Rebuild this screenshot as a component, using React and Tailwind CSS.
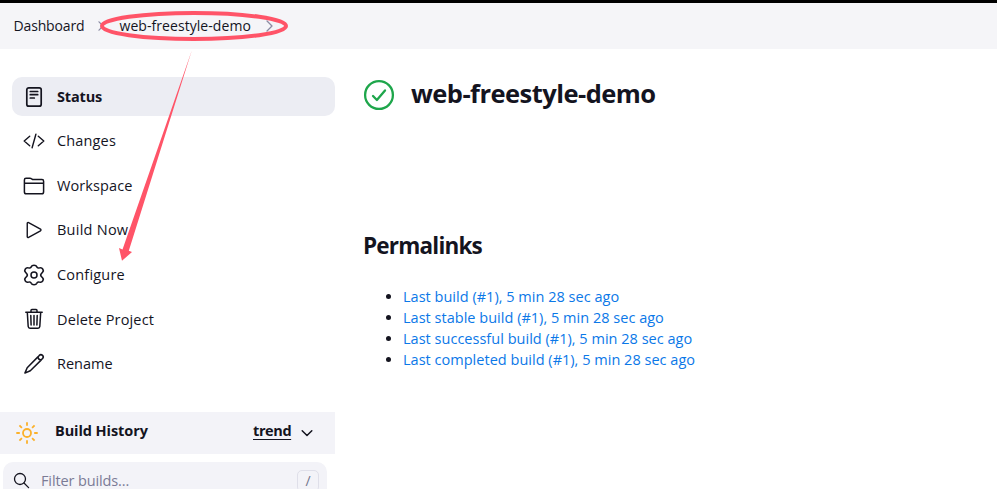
const ink = { fill: 'none', stroke: 'currentColor', strokeLinecap: 'round', strokeLinejoin: 'round' };

function Icon({ children, size = 24, box = 24, width = 1.5, className = '' }) {
  return (
    <svg width={size} height={size} viewBox={`0 0 ${box} ${box}`} {...ink} strokeWidth={width} className={`shrink-0 ${className}`}>
      {children}
    </svg>
  );
}

const StatusIcon = () => (
  <Icon width={1.7}>
    <rect x="4.8" y="2.8" width="14.4" height="18.4" rx="2" />
    <path d="M8.3 6.5h7.4M8.3 9.7h7.4M8.3 13h4" />
  </Icon>
);
const CodeIcon = () => (
  <Icon width={1.4}>
    <path d="M7.7 7.2 2.2 12l5.5 4.8M16.3 7.2l5.5 4.8-5.5 4.8M13.9 5.2l-3.8 13.6" />
  </Icon>
);
const FolderIcon = () => (
  <Icon>
    <path d="M2.4 9.2V5.9c0-.9.7-1.6 1.6-1.6h4c.5 0 .9.1 1.3.4l.7.5c.4.3.8.4 1.3.4h8.7c.9 0 1.6.7 1.6 1.6v2M2.4 9.2h19.2v8.7c0 1-.8 1.8-1.8 1.8H4.2c-1 0-1.8-.8-1.8-1.8z" />
  </Icon>
);
const PlayIcon = () => (
  <Icon width={1.4}>
    <path d="M5.25 5.3v13.4a.9.9 0 0 0 1.35.78l11.9-6.7a.9.9 0 0 0 0-1.56L6.6 4.52a.9.9 0 0 0-1.35.78z" />
  </Icon>
);
const GearIcon = () => (
  <Icon width={1.5}>
    <circle cx="12" cy="12" r="3" />
    <path transform="translate(-1.3 0) scale(1.11 1)" d="M9.5 3.7C10 2.4 10.8 2.2 12 2.2s2 .2 2.5 1.5c.4 1.2 1.3 1.6 2.5 1.2 1.5-.5 2.2 0 2.9 1.2s.9 2-.2 3.1c-1 1-1.7 1.6-1.7 2.8s.7 1.8 1.7 2.8c1.1 1.1.9 1.9.2 3.1s-1.4 1.7-2.9 1.2c-1.2-.4-2.1 0-2.5 1.2-.5 1.3-1.3 1.5-2.5 1.5s-2-.2-2.5-1.5c-.4-1.2-1.3-1.6-2.5-1.2-1.5.5-2.2 0-2.9-1.2s-.9-2 .2-3.1c1-1 1.7-1.6 1.7-2.8s-.7-1.8-1.7-2.8c-1.1-1.1-.9-1.9-.2-3.1S5.5 4.4 7 4.9c1.2.4 2.1 0 2.5-1.2z" />
  </Icon>
);
const TrashIcon = () => (
  <Icon>
    <path d="M5.3 5.3l.9 14.2c.1 1 .8 1.8 1.8 1.8h8c1 0 1.7-.8 1.8-1.8l.9-14.2M3.8 5.3h16.4M9 5.1V3.5c0-.5.4-.9.9-.9h4.2c.5 0 .9.4.9.9v1.6M12 8.5v9.6M8.8 8.5l.3 9.6M15.2 8.5l-.3 9.6" />
  </Icon>
);
const PencilIcon = () => (
  <Icon>
    <path d="M15.9 4.9 5.2 15.7 2.9 21.1l5.4-2.3L19.1 8.1M15.9 4.9l1.4-1.5a2.26 2.26 0 0 1 3.2 3.2l-1.4 1.5M15.9 4.9c.2 1.7 1.5 3 3.2 3.2" />
  </Icon>
);

const items = [
  { label: 'Status', icon: StatusIcon, cls: 'bg-[#ecedf3] font-bold tracking-[-0.15px]' },
  { label: 'Changes', icon: CodeIcon, cls: 'tracking-[0.15px]' },
  { label: 'Workspace', icon: FolderIcon, cls: 'tracking-[0.1px]' },
  { label: 'Build Now', icon: PlayIcon, cls: 'tracking-[0.25px]' },
  { label: 'Configure', icon: GearIcon, cls: 'tracking-[0.2px]' },
  { label: 'Delete Project', icon: TrashIcon, cls: 'tracking-[0.16px]' },
  { label: 'Rename', icon: PencilIcon, cls: '' },
];

const links = ['Last build', 'Last stable build', 'Last successful build', 'Last completed build'];

export default function App() {
  return (
    <div className="relative h-[489px] w-[997px] overflow-hidden bg-white font-['Open_Sans','Noto_Sans',sans-serif] text-[14.5px] text-[#14141f]">
      <header className="flex h-[49px] items-center border-t-[3px] border-black bg-[#f5f5f8] pl-[13.5px] text-[14px]">
        <span className="w-[84px] pb-[2px] tracking-[-0.15px]">Dashboard</span>
        <Icon size={10} box={10} width={1.2} className="text-[#8b8ba3]"><path d="M1 .8 5 5 1 9.2" /></Icon>
        <span className="ml-[12px] w-[144px] whitespace-nowrap pb-[2px] tracking-[0.06px]">web-freestyle-demo</span>
        <Icon size={12} box={12} width={1.3} className="text-[#8b8ba3]"><path d="M3 1 8 6 3 11" /></Icon>
      </header>

      <div className="flex">
        <aside className="w-[335px] shrink-0 pt-[28px]">
          <nav className="flex flex-col gap-[5.6px] pl-3">
            {items.map(({ label, icon: Glyph, cls }) => (
              <a key={label} className={`flex h-[39px] items-center gap-[11px] rounded-[10px] pl-[10px] ${cls}`}>
                <Glyph />
                <span>{label}</span>
              </a>
            ))}
          </nav>

          <div className="mt-[28.4px] flex h-[42px] items-center bg-[#f3f3f8] pl-[15px] font-bold">
            <Icon className="text-[#fbb12b]" width={1.8}>
              <circle cx="12" cy="12" r="4" />
              <path strokeLinecap="butt" d="M12 1.3v3.5M12 19.2v3.5M1.3 12h3.5M19.2 12h3.5M4.4 4.4l2.5 2.5M17.1 17.1l2.5 2.5M4.4 19.6l2.5-2.5M17.1 6.9l2.5-2.5" />
            </Icon>
            <span className="ml-4 w-[198px] pb-1 tracking-[-0.08px]">Build History</span>
            <span className="w-[38px] pb-1 tracking-[-0.4px] underline decoration-1 underline-offset-[3px]">trend</span>
            <Icon size={12} box={12} className="ml-[10px]"><path d="m1.2 3.7 4.8 4.8 4.8-4.8" /></Icon>
          </div>

          <div className="ml-[3px] mt-2 flex h-[38px] w-[324px] items-center rounded-[10px] bg-[#f3f3f8] pl-[10px]">
            <Icon size={17} box={17} width={1.3}><circle cx="7" cy="7" r="5.5" /><path d="m11 11 4.6 4.6" /></Icon>
            <span className="ml-[11px] w-[256px] tracking-[-0.12px] text-[#7b7b96]">Filter builds...</span>
            <kbd className="flex h-[22px] w-[22px] items-center justify-center rounded-[5px] border border-[#dfdfe9] font-['Open_Sans',sans-serif] text-[14px] text-[#73738c]">/</kbd>
          </div>
        </aside>

        <main className="pl-[28px] pt-[28px]">
          <div className="flex h-9 items-center gap-4">
            <svg width="32" height="32" viewBox="0 0 32 32" {...ink} strokeWidth="2.3" className="text-[#1ea64b]">
              <circle cx="16" cy="16" r="13.9" />
              <path d="m10 17 3.9 4L22 11.5" />
            </svg>
            <h1 className="pb-[3px] text-[25.5px] font-bold leading-[33px] tracking-[-0.53px]">web-freestyle-demo</h1>
          </div>
          <h2 className="mt-[118px] text-[22.5px] font-bold leading-[30px] tracking-[-0.8px]">Permalinks</h2>
          <ul className="mt-[25px] list-disc pl-[40px] leading-[21px]">
            {links.map((name) => (
              <li key={name}><a className="whitespace-nowrap tracking-[0.02px] text-[#0b78e8]">{name} (#1), 5 min 28 sec ago</a></li>
            ))}
          </ul>
        </main>
      </div>

      <svg className="pointer-events-none absolute left-0 top-0" width="335" height="270" viewBox="0 0 335 270" fill="none">
        <ellipse cx="194" cy="26" rx="92" ry="13" stroke="#ff5468" strokeWidth="4" />
        <path fill="#ff5468" d="M191.8 50.5 122.5 249.5 119 248 122 260.8 132 252 128.8 250.8z" />
      </svg>
    </div>
  );
}
